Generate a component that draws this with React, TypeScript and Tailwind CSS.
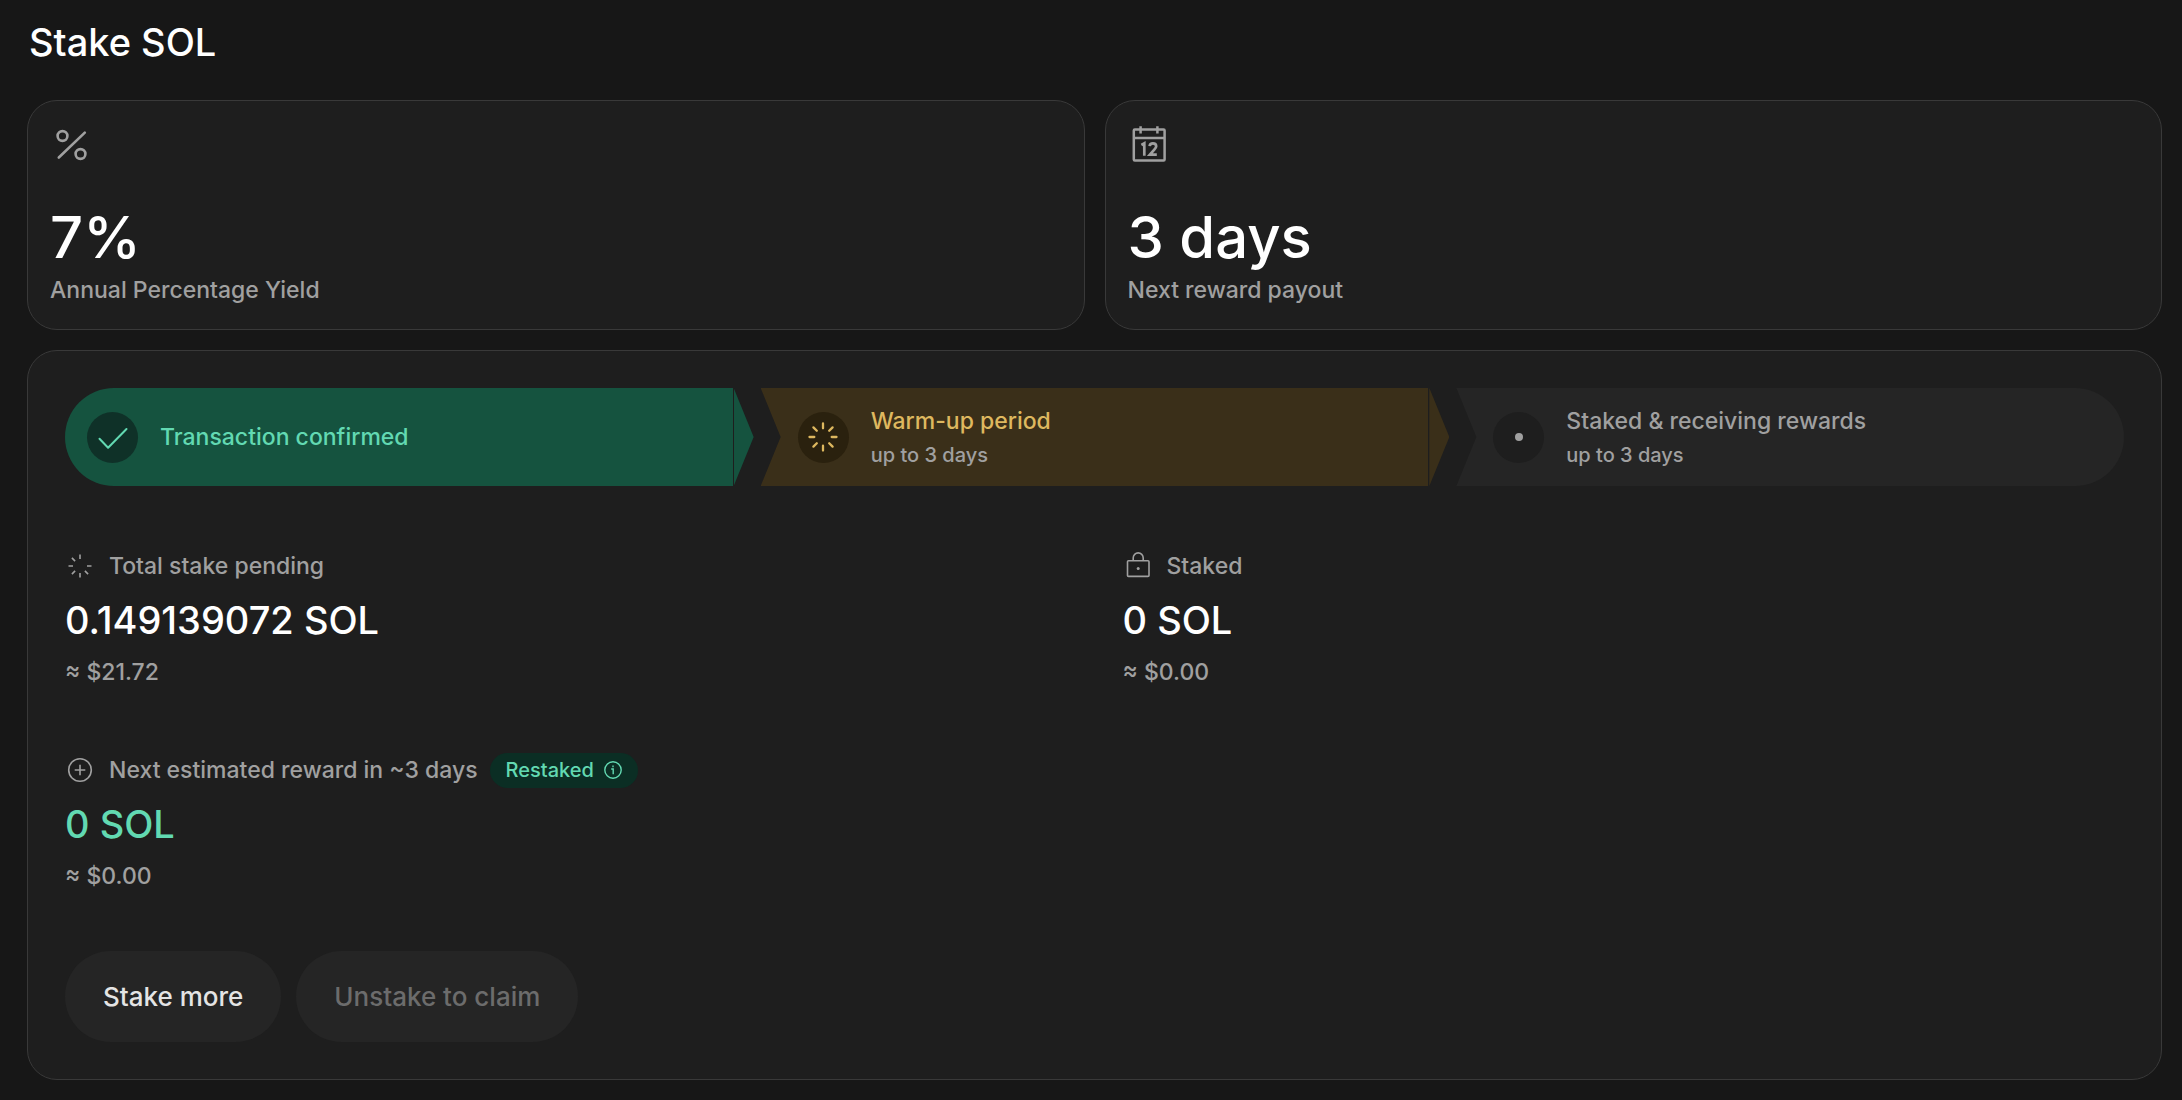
import clsx from "clsx";
import type { ReactNode } from "react";

const PercentIcon = () => (
  <svg viewBox="0 0 40 40" className="size-10" fill="none" stroke="currentColor" strokeWidth="2.6" aria-hidden="true">
    <circle cx="12.5" cy="11" r="4.9" />
    <circle cx="30.5" cy="29" r="4.9" />
    <path d="M34.8 7.6 8.8 32.5" strokeLinecap="round" />
  </svg>
);

const CalendarIcon = () => (
  <svg viewBox="0 0 40 40" className="size-10" fill="none" stroke="currentColor" strokeWidth="2.5" aria-hidden="true">
    <rect x="5.8" y="4.6" width="30.8" height="30.8" rx="1" />
    <path d="M5.8 13h30.8M12.6 1.2v7.4M29.4 1.2v7.4" />
    <path d="m13.4 20 2.9-1.7v12.5" strokeWidth="2.7" />
    <path d="M21.6 21.2c.2-1.9 1.5-2.9 3.3-2.9 2 0 3.3 1.1 3.3 2.9 0 1.3-.8 2.3-1.9 3.5l-4.4 4.9h6.9" strokeWidth="2.7" />
  </svg>
);

const CheckIcon = () => (
  <svg viewBox="0 0 32 32" className="size-8" fill="none" stroke="currentColor" strokeWidth="2" strokeLinecap="round" strokeLinejoin="round" aria-hidden="true">
    <path d="m2.5 17.8 8.6 9L29.5 8" />
  </svg>
);

const SpinnerIcon = () => (
  <svg viewBox="0 0 32 32" className="size-8" stroke="currentColor" strokeWidth="2.3" strokeLinecap="round" aria-hidden="true">
    <path d="M16 2.5v4.8M16 24.7v4.8M2.5 16h4.8M24.7 16h4.8M6.4 6.4l3.4 3.4M22.2 22.2l3.4 3.4M6.4 25.6l3.4-3.4M22.2 9.8l3.4-3.4" />
  </svg>
);

const PendingIcon = () => (
  <svg viewBox="0 0 30 30" className="size-[30px]" stroke="currentColor" strokeWidth="1.6" aria-hidden="true">
    <path d="M15 3.5V8M15 22v4.5M3.5 15H8M22 15h4.5M6.9 6.9l3.2 3.2M19.9 19.9l3.2 3.2M6.9 23.1l3.2-3.2" />
  </svg>
);

const LockIcon = () => (
  <svg viewBox="0 0 30 30" className="size-[30px]" fill="none" stroke="currentColor" strokeWidth="1.6" aria-hidden="true">
    <rect x="4.5" y="9.8" width="21.5" height="15.6" rx="1" />
    <path d="M10.2 9.800V6.900a5 5 0 0 1 10 0v2.900" />
    <circle cx="15.2" cy="17.6" r="1.5" fill="currentColor" stroke="none" />
  </svg>
);

const PlusIcon = () => (
  <svg viewBox="0 0 30 30" className="size-[30px]" fill="none" stroke="currentColor" strokeWidth="1.6" aria-hidden="true">
    <circle cx="15" cy="15" r="11.3" />
    <path d="M15 9.7v10.600M9.700 15h10.600" />
  </svg>
);

const InfoIcon = () => (
  <svg viewBox="0 0 18 18" className="size-[18px]" fill="none" stroke="currentColor" strokeWidth="1.4" aria-hidden="true">
    <circle cx="9" cy="9" r="8.2" />
    <path d="M7.2 8h2v5.2M9 4.6v1.600" />
  </svg>
);

const SummaryCard: React.FC<{ icon: ReactNode; value: string; label: string }> = ({
  icon,
  value,
  label,
}) => (
  <div className="rounded-[30px] border border-[#393939] bg-[#1e1e1e] px-[22px] pt-6 pb-[22px] text-[#a0a0a0]">
    {icon}
    <p className="mt-9 text-[58px] leading-[72px] font-medium text-white">{value}</p>
    <p className="text-[23px] leading-[34px] font-medium">{label}</p>
  </div>
);

interface StepProps {
  icon: ReactNode;
  title: string;
  note?: string;
  className: string;
  titleClass: string;
  iconClass: string;
  tipClass?: string;
}

const Step: React.FC<StepProps> = ({
  icon,
  title,
  note,
  className,
  titleClass,
  iconClass,
  tipClass,
}) => (
  <li className="relative">
    <div className={clsx("flex h-[98px] items-center gap-[22px]", className)}>
      <span className={clsx("flex size-[51px] shrink-0 items-center justify-center rounded-full", iconClass)}>
        {icon}
      </span>
      <div className="font-medium">
        <p className={clsx("text-[23px] leading-9", titleClass)}>{title}</p>
        {note && <p className="text-xl leading-8 text-[#a0a0a0]">{note}</p>}
      </div>
    </div>
    {tipClass && (
      <span
        className={clsx(
          "absolute top-0 left-full ml-px h-full w-5 [clip-path:polygon(0_0,100%_50%,0_100%)]",
          tipClass
        )}
      />
    )}
  </li>
);

interface StatProps {
  icon: ReactNode;
  label: string;
  amount: string;
  fiat: string;
  badge?: ReactNode;
  amountClass?: string;
}

const Stat: React.FC<StatProps> = ({ icon, label, amount, fiat, badge, amountClass }) => (
  <div className="text-[23px] font-medium text-[#a0a0a0]">
    <div className="flex h-9 items-center">
      {icon}
      <span className="ml-3.5">{label}</span>
      {badge}
    </div>
    <p className={clsx("mt-3 text-[38px] leading-[48px]", amountClass ?? "text-white")}>{amount}</p>
    <p className="mt-2.5 leading-9">{fiat}</p>
  </div>
);

const App = () => {
  return (
    <main className="min-h-screen bg-[#171717] pt-4 pr-5 pb-4 pl-[27px] font-['Inter','Liberation_Sans',sans-serif]">
      <h1 className="pl-0.5 text-[38px] leading-[52px] font-medium text-white">Stake SOL</h1>

      <section className="mt-8 grid grid-cols-2 gap-5">
        <SummaryCard icon={<PercentIcon />} value="7%" label="Annual Percentage Yield" />
        <SummaryCard icon={<CalendarIcon />} value="3 days" label="Next reward payout" />
      </section>

      <section className="mt-5 rounded-[30px] border border-[#393939] bg-[#1e1e1e] p-[37px]">
        <ol className="grid grid-cols-3 gap-7">
          <Step
            icon={<CheckIcon />}
            title="Transaction confirmed"
            className="rounded-l-full bg-[#15533f] pl-[22px]"
            titleClass="text-[#62d9b2]"
            iconClass="bg-[#0f3128] text-[#62d9b2]"
            tipClass="bg-[#15533f]"
          />
          <Step
            icon={<SpinnerIcon />}
            title="Warm-up period"
            note="up to 3 days"
            className="bg-[#3a2f19] pl-[37px] [clip-path:polygon(0_0,100%_0,100%_100%,0_100%,20px_50%)]"
            titleClass="text-[#deb85f]"
            iconClass="bg-[#2a210e] text-[#deb85f]"
            tipClass="bg-[#3a2f19]"
          />
          <Step
            icon={<span className="size-2 rounded-full bg-[#a0a0a0]" />}
            title="Staked & receiving rewards"
            note="up to 3 days"
            className="rounded-r-full bg-[#252525] pl-[37px] [clip-path:polygon(0_0,100%_0,100%_100%,0_100%,20px_50%)]"
            titleClass="text-[#a0a0a0]"
            iconClass="bg-[#1e1e1e]"
          />
        </ol>

        <div className="mt-[62px] grid grid-cols-2 gap-x-14 gap-y-[62px]">
          <Stat icon={<PendingIcon />} label="Total stake pending" amount="0.149139072 SOL" fiat="≈ $21.72" />
          <Stat icon={<LockIcon />} label="Staked" amount="0 SOL" fiat="≈ $0.00" />
          <Stat
            icon={<PlusIcon />}
            label="Next estimated reward in ~3 days"
            amount="0 SOL"
            fiat="≈ $0.00"
            amountClass="text-[#62d9b2]"
            badge={
              <span className="ml-3 flex h-[35px] items-center gap-2.5 rounded-full bg-[#0b2e24] px-4 text-xl text-[#62d9b2]">
                Restaked
                <InfoIcon />
              </span>
            }
          />
        </div>

        <div className="mt-[57px] flex gap-[15px]">
          <button type="button" className="h-[91px] rounded-full bg-[#252525] px-[38px] text-[26px] font-medium text-[#e4e4e4]">
            Stake more
          </button>
          <button type="button" disabled className="h-[91px] rounded-full bg-[#252525] px-[38px] text-[26px] font-medium text-[#6c6c6c]">
            Unstake to claim
          </button>
        </div>
      </section>
    </main>
  );
};

export default App;
